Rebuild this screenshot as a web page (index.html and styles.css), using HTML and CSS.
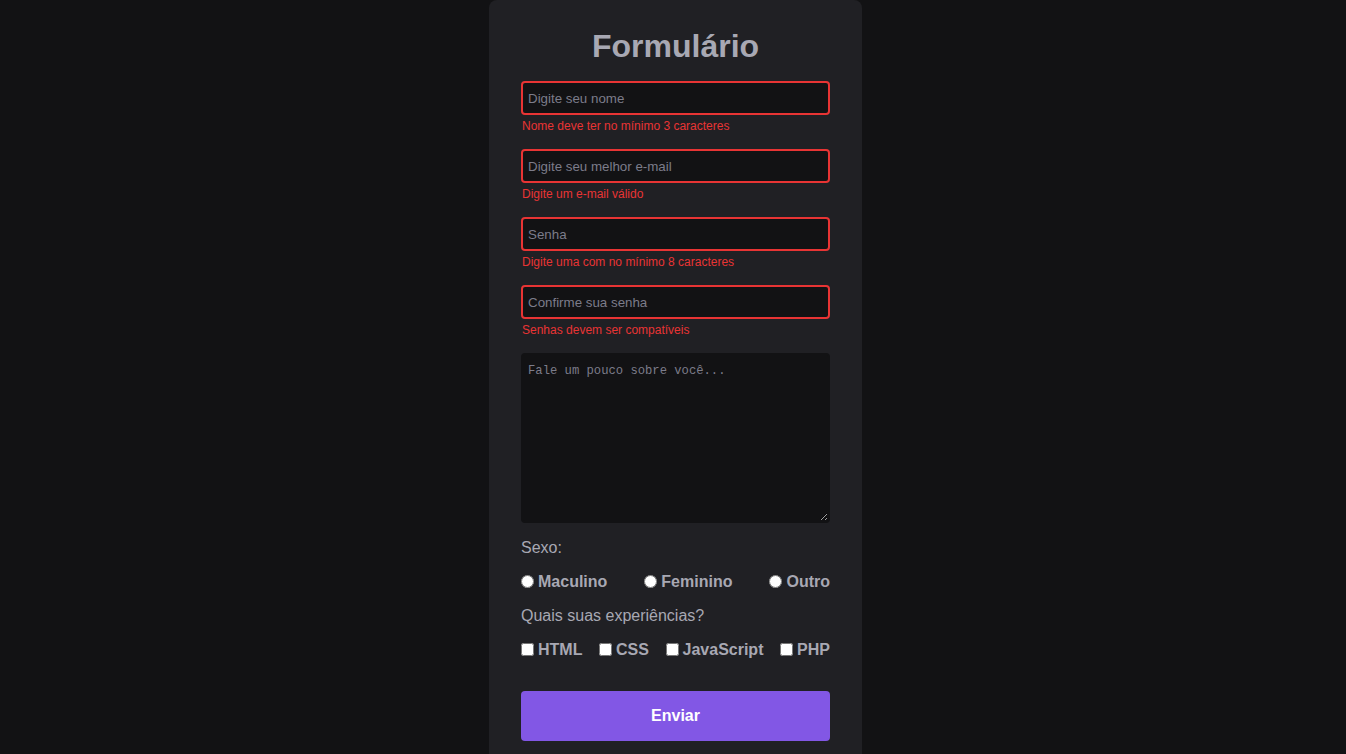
FILE: index.html
```html
<!DOCTYPE html>
<html lang="pt-BR">
<head>
<meta charset="utf-8">
<title>Formulário</title>
<link rel="stylesheet" href="styles.css">
</head>
<body>
<main class="card">
  <h1 class="title">Formulário</h1>
  <form class="form">
    <div class="field">
      <input class="input invalid" type="text" placeholder="Digite seu nome">
      <span class="error">Nome deve ter no mínimo 3 caracteres</span>
    </div>
    <div class="field">
      <input class="input invalid" type="email" placeholder="Digite seu melhor e-mail">
      <span class="error">Digite um e-mail válido</span>
    </div>
    <div class="field">
      <input class="input invalid" type="password" placeholder="Senha">
      <span class="error">Digite uma com no mínimo 8 caracteres</span>
    </div>
    <div class="field">
      <input class="input invalid" type="password" placeholder="Confirme sua senha">
      <span class="error">Senhas devem ser compatíveis</span>
    </div>
    <textarea class="textarea" placeholder="Fale um pouco sobre você..."></textarea>
    <p class="label">Sexo:</p>
    <div class="options">
      <label class="option"><input class="radio" type="radio" name="sexo">Maculino</label>
      <label class="option"><input class="radio" type="radio" name="sexo">Feminino</label>
      <label class="option"><input class="radio" type="radio" name="sexo">Outro</label>
    </div>
    <p class="label">Quais suas experiências?</p>
    <div class="options">
      <label class="option"><input class="check" type="checkbox">HTML</label>
      <label class="option"><input class="check" type="checkbox">CSS</label>
      <label class="option"><input class="check" type="checkbox">JavaScript</label>
      <label class="option"><input class="check" type="checkbox">PHP</label>
    </div>
    <button class="button" type="button">Enviar</button>
  </form>
</main>
</body>
</html>
```

FILE: styles.css
```css
* { box-sizing: border-box; }

html, body {
  margin: 0;
  padding: 0;
  background: #121214;
  font-family: "Liberation Sans", Arial, sans-serif;
}

body {
  display: flex;
  justify-content: center;
  min-height: 100vh;
  padding-left: 5px;
}

.card {
  width: 373px;
  background: #202024;
  border-radius: 8px;
  padding: 28px 32px 32px;
}

.title {
  margin: 0 0 16px;
  text-align: center;
  font-size: 32px;
  font-weight: 700;
  color: #a8a8b3;
}

.form {
  display: flex;
  flex-direction: column;
  gap: 16px;
}

.field {
  display: flex;
  flex-direction: column;
}

.input {
  height: 34px;
  width: 100%;
  background: #121214;
  border: 2px solid #121214;
  border-radius: 4px;
  padding: 0 5px;
  font-family: "Liberation Sans", Arial, sans-serif;
  font-size: 13.333px;
  color: #c4c4cc;
  outline: none;
}

.input.invalid { border-color: #e83434; }

.input::placeholder,
.textarea::placeholder { color: #7c7c8a; }

.error {
  margin-top: 4px;
  padding-left: 1px;
  font-size: 12px;
  line-height: 14px;
  color: #e83434;
}

.textarea {
  height: 170px;
  width: 100%;
  background: #121214;
  border: 2px solid #121214;
  border-radius: 4px;
  padding: 9px 5px;
  font-family: "Liberation Mono", Consolas, monospace;
  font-size: 12.2px;
  color: #c4c4cc;
  outline: none;
}

.label {
  margin: 0;
  font-size: 16px;
  color: #a8a8b3;
}

.options {
  display: flex;
  justify-content: space-between;
  align-items: center;
}

.option {
  display: flex;
  align-items: center;
  font-size: 16px;
  font-weight: 700;
  color: #a8a8b3;
}

.radio,
.check {
  width: 13px;
  height: 13px;
  margin: -2px 4px 0 0;
}

.button {
  margin-top: 16px;
  height: 50px;
  width: 100%;
  border: none;
  border-radius: 4px;
  background: #8257e5;
  color: #ffffff;
  font-family: "Liberation Sans", Arial, sans-serif;
  font-size: 16px;
  font-weight: 700;
}
```
